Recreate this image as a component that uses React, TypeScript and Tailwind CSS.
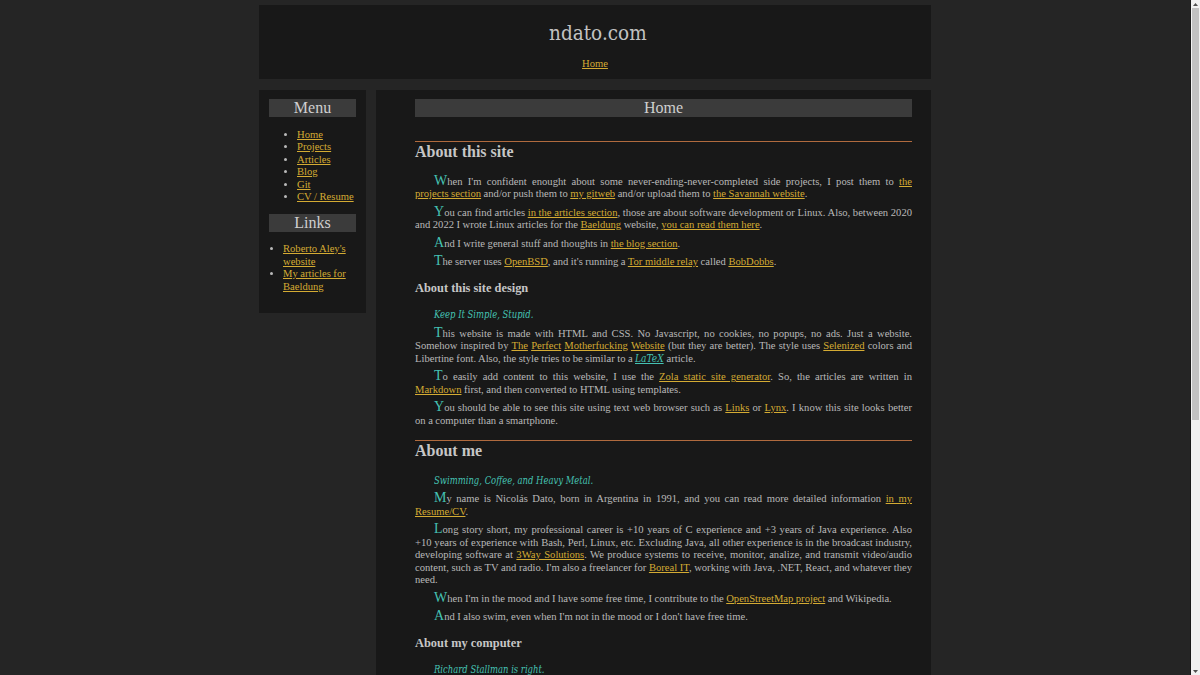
import React from "react";

const L = ({ children }: { children: React.ReactNode }) => (
  <a href="#" className="text-[#d4ab33] underline underline-offset-[1px]">
    {children}
  </a>
);

const Cap = ({ c }: { c: string }) => (
  <span className="text-[14px] leading-[0px] text-[#45c2b3]">{c}</span>
);

const P = ({ first, children }: { first: string; children: React.ReactNode }) => (
  <p className="mt-[6px] indent-[19px] text-justify leading-[12.5px]">
    <Cap c={first} />
    {children}
  </p>
);

const Quote = ({ children }: { children: React.ReactNode }) => (
  <p className="mt-[6px] pl-[19px] leading-[12.5px]">
    <span className="inline-block origin-left [transform:scaleX(0.79)] whitespace-nowrap font-['DejaVu_Serif',serif] italic text-[10.7px] text-[#45c2b3] [word-spacing:0px]">
      {children}
    </span>
  </p>
);

const H2 = ({ children }: { children: React.ReactNode }) => (
  <>
    <div className="h-px bg-[#b06a3e]" />
    <h2 className="text-[16px] font-bold leading-[20px] pb-[7.75px] text-[#c6c6c6] [word-spacing:0px]">{children}</h2>
  </>
);

const H3 = ({ children }: { children: React.ReactNode }) => (
  <h3 className="mt-[11px] text-[12.4px] font-bold leading-[16px] pb-[7.5px] text-[#c6c6c6] [word-spacing:0px]">
    {children}
  </h3>
);

const Bar = ({ children }: { children: React.ReactNode }) => (
  <div className="h-[18px] bg-[#3b3b3b] text-center text-[16px] leading-[18px] text-[#cfcfcf] [word-spacing:0px]">
    {children}
  </div>
);

export default function App() {
  return (
    <div className="min-h-screen bg-[#252525] font-['Liberation_Serif',serif] text-[10.6px] [word-spacing:-0.12px] text-[#b9b9b9] pb-[20px] pr-[10px]">
      <div className="mx-auto w-[672px] pt-[5px]">
        <header className="h-[74px] bg-[#181818] flex flex-col items-center pt-[16px]">
          <div className="ml-[6px] w-[98px] h-[24px] overflow-visible">
            <span className="inline-block origin-left [transform:scaleX(0.9)] whitespace-nowrap font-['DejaVu_Serif',serif] text-[20.5px] leading-[24px] text-[#c2c2c2]">
              ndato.com
            </span>
          </div>
          <div className="mt-[12.5px] leading-[12.5px]">
            <L>Home</L>
          </div>
        </header>

        <div className="mt-[11px] flex items-start gap-[10px]">
          <aside className="w-[107px] shrink-0 bg-[#181818] px-[10px] pt-[9px] pb-[20px]">
            <Bar>Menu</Bar>
            <ul className="mt-[11.5px] list-disc pl-[28px] leading-[12.5px]">
              <li><L>Home</L></li>
              <li><L>Projects</L></li>
              <li><L>Articles</L></li>
              <li><L>Blog</L></li>
              <li><L>Git</L></li>
              <li className="whitespace-nowrap"><L>CV / Resume</L></li>
            </ul>
            <div className="mt-[10.75px]">
              <Bar>Links</Bar>
            </div>
            <ul className="mt-[11px] list-disc pl-[14px] leading-[12.5px]">
              <li><L>Roberto Aley's website</L></li>
              <li><L>My articles for Baeldung</L></li>
            </ul>
          </aside>

          <main className="w-[555px] shrink-0 bg-[#181818] pl-[39px] pr-[19px] pt-[9px] pb-[30px]">
            <Bar>Home</Bar>
            <div className="mt-[24px]" />
            <H2>About this site</H2>
            <P first="W">
              hen I'm confident enought about some never-ending-never-completed side projects, I post them to{" "}
              <L>the projects section</L> and/or push them to <L>my gitweb</L> and/or upload them to{" "}
              <L>the Savannah website</L>.
            </P>
            <P first="Y">
              ou can find articles <L>in the articles section</L>, those are about software development or Linux. Also,
              between 2020 and 2022 I wrote Linux articles for the <L>Baeldung</L> website,{" "}
              <L>you can read them here</L>.
            </P>
            <P first="A">
              nd I write general stuff and thoughts in <L>the blog section</L>.
            </P>
            <P first="T">
              he server uses <L>OpenBSD</L>, and it's running a <L>Tor middle relay</L> called <L>BobDobbs</L>.
            </P>

            <H3>About this site design</H3>
            <Quote>Keep It Simple, Stupid.</Quote>
            <P first="T">
              his website is made with HTML and CSS. No Javascript, no cookies, no popups, no ads. Just a website.
              Somehow inspired by <L>The</L> <L>Perfect</L> <L>Motherfucking</L> <L>Website</L> (but they are better).
              The style uses <L>Selenized</L> colors and Libertine font. Also, the style tries to be similar to a{" "}
              <a
                href="#"
                className="inline-block indent-0 origin-left [transform:scaleX(0.85)] mr-[-5px] font-['DejaVu_Serif',serif] italic text-[10.7px] leading-[12.5px] text-[#45c2b3] underline"
              >
                LaTeX
              </a>{" "}
              article.
            </P>
            <P first="T">
              o easily add content to this website, I use the <L>Zola static site generator</L>. So, the articles are
              written in <L>Markdown</L> first, and then converted to HTML using templates.
            </P>
            <P first="Y">
              ou should be able to see this site using text web browser such as <L>Links</L> or <L>Lynx</L>. I know
              this site looks better on{"\u00a0"}a computer than a smartphone.
            </P>

            <div className="mt-[12.75px]" />
            <H2>About me</H2>
            <Quote>Swimming, Coffee, and Heavy Metal.</Quote>
            <P first="M">
              y name is Nicolás Dato, born in Argentina in 1991, and you can read more detailed information{" "}
              <L>in my Resume/CV</L>.
            </P>
            <P first="L">
              ong story short, my professional career is +10 years of C experience and +3 years of Java experience.
              Also +10{"\u00a0"}years of experience with Bash, Perl, Linux, etc. Excluding Java, all other experience
              is in the broadcast industry, developing software at <L>3Way Solutions</L>. We produce systems to
              receive, monitor, analize, and transmit video/audio content, such as TV and radio. I'm also a freelancer
              for <L>Boreal IT</L>, working with Java, .NET, React, and whatever they need.
            </P>
            <P first="W">
              hen I'm in the mood and I have some free time, I contribute to the <L>OpenStreetMap project</L> and
              Wikipedia.
            </P>
            <P first="A">nd I also swim, even when I'm not in the mood or I don't have free time.</P>

            <H3>About my computer</H3>
            <Quote>Richard Stallman is right.</Quote>
            <P first="M">
              y computer runs a free operating system, and I try to use free software as much as I can. I use a
              tiling window manager, a terminal, a text editor and a web browser, and that is pretty much all I need.
            </P>
            <P first="I">
              {" "}believe that software should respect the freedom of its users, and that is why I prefer to use and
              write free software.
            </P>
          </main>
        </div>
      </div>

      {/* browser scrollbar overlay */}
      <div className="fixed right-0 top-0 h-screen w-[10px] bg-[#f1f1f1] border-l border-[#1a1a1a]">
        <div className="absolute left-0 right-0 top-0 h-[8px] flex items-center justify-center">
          <svg width="5" height="3" viewBox="0 0 5 3">
            <path d="M0 3 L2.5 0 L5 3 Z" fill="#505050" />
          </svg>
        </div>
        <div className="absolute left-[1px] right-[1px] top-[8px] h-[412px] bg-[#c1c1c1]" />
        <div className="absolute left-0 right-0 bottom-0 h-[8px] flex items-center justify-center">
          <svg width="5" height="3" viewBox="0 0 5 3">
            <path d="M0 0 L5 0 L2.5 3 Z" fill="#505050" />
          </svg>
        </div>
      </div>
    </div>
  );
}
